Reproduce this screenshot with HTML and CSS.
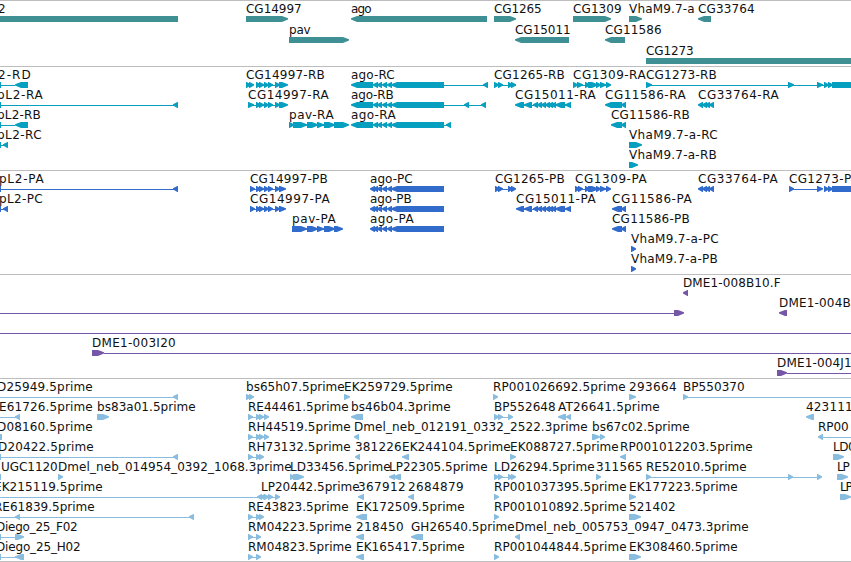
FILE: index.html
```html
<!DOCTYPE html>
<html lang="en">
<head>
<meta charset="utf-8">
<title>Genome tracks</title>
<link rel="stylesheet" href="styles.css">
</head>
<body>
<main class="browser">
  <section class="track genes"></section>
  <section class="track transcripts"></section>
  <section class="track proteins"></section>
  <section class="track clones"></section>
  <section class="track ests"></section>
</main>
<script src="tracks.js"></script>
</body>
</html>
```
FILE: styles.css
```css
body {
  margin: 0;
  background: #fff;
}

.browser {
  display: flex;
  flex-direction: column;
  height: 562px;
  overflow: hidden;
}

.track {
  box-sizing: border-box;
  flex: none;
  height: 104px;
  border-top: 1px solid #bdbdbd;
  overflow: hidden;
}

.genes { height: 66px; color: #3f9094; }
.transcripts { color: #069fc0; }
.proteins { color: #316bcc; }
.clones { color: #7656a6; }
.ests { height: 184px; color: #88bddf; border-bottom: 1px solid #bdbdbd; }

.canvas {
  display: block;
  width: 100%;
  height: 100%;
}

.label {
  font: 12px "DejaVu Sans", sans-serif;
  fill: #111;
}

.glyph {
  fill: currentColor;
}
```
FILE: tracks.js
```js
// Feature: [row, label, label start, label end, glyphs]
// Glyph tokens: "a>b" and "a<b" are stranded blocks, "a=b" a plain block, "a_b" a connector.
const agoExons = '373<378 377<382 382<387 387<392 391<444';
const cgExons = '256>261 259>264 264>269 268>273 275>280 279>288 256_286';
const cdsExons = '250>255 256>261 259>264 264>269 268>273 275>280 279>286 250_285';
const exons15011 = '524<532 533<538 537<542 541<546 545<550 548<553 551<556 555<565 565<571 518_570';
const exons1309 = '585>590 588>598 596>601 600>606 606>611 578_608';
const exons33764 = '698<703 702<707 705<710 709<714';

const tracks = {
  genes: { pitch: 21, features: [
    [0, '2', -2, 6, '0=178'],
    [0, 'CG14997', 246, 302, '246>288'],
    [0, 'ago', 351, 372, '351<487'],
    [0, 'CG1265', 494, 542, '494>516'],
    [0, 'CG1309', 573, 622, '573>611'],
    [0, 'VhaM9.7-a', 629, 695, '629>642'],
    [0, 'CG33764', 698, 755, '698<711'],
    [1, 'pav', 289, 311, '289>349'],
    [1, 'CG15011', 515, 571, '515<569'],
    [1, 'CG11586', 605, 662, '605<625'],
    [2, 'CG1273', 646, 694, '646=851']
  ]},
  transcripts: { pitch: 20, features: [
    [0, '2-RD', -2, 31, '0=1 0_15 15<28'],
    [0, 'CG14997-RB', 246, 325, '246>251 249>254 ' + cgExons],
    [0, 'ago-RC', 351, 395, '351<373 ' + agoExons + ' 444_487 483<488'],
    [0, 'CG1265-RB', 494, 565, '494>499 498>503 508>513 511>516 494_516'],
    [0, 'CG1309-RA', 573, 646, '573>578 577>583 ' + exons1309],
    [0, 'CG1273-RB', 646, 717, '646>652 646_851 788>794 817>823 824>829 828>833 832=851'],
    [1, 'pL2-RA', -3, 43, '0=1 0_178 173<178'],
    [1, 'CG14997-RA', 248, 329, '248>254 250_257 ' + cgExons],
    [1, 'ago-RB', 351, 394, '351<373 ' + agoExons + ' 444_485 464<469 481<486'],
    [1, 'CG15011-RA', 515, 596, '515<524 ' + exons15011],
    [1, 'CG11586-RA', 605, 686, '605<622 621<626'],
    [1, 'CG33764-RA', 698, 779, exons33764],
    [2, 'pL2-RB', -3, 41, '0=1 0_15 15<28'],
    [2, 'pav-RA', 289, 334, '289>294 293>307 307>318 317>324 324>335 334>349 290_348'],
    [2, 'ago-RA', 351, 396, '351<373 ' + agoExons + ' 444_450 446<451'],
    [2, 'CG11586-RB', 611, 690, '611<622 621<626'],
    [3, 'pL2-RC', -3, 42, '0=1 0_5 3<8'],
    [3, 'VhaM9.7-a-RC', 629, 718, '629>642'],
    [4, 'VhaM9.7-a-RB', 629, 717, '629>638']
  ]},
  proteins: { pitch: 20, features: [
    [0, 'pL2-PA', -1, 44, '0=1 0_178 173<178'],
    [0, 'CG14997-PB', 250, 328, cdsExons],
    [0, 'ago-PC', 370, 413, '370<375 ' + agoExons],
    [0, 'CG1265-PB', 495, 565, '495>500 498>503 508>513 511>516 496_515'],
    [0, 'CG1309-PA', 575, 647, '575>580 578>583 ' + exons1309],
    [0, 'CG33764-PA', 698, 778, exons33764],
    [0, 'CG1273-PB', 789, 860, '789>794 790_820 817>823 824>829 828>833 832=851'],
    [1, 'pL2-PC', -1, 43, '0=1 0_5 3<8'],
    [1, 'CG14997-PA', 250, 330, cdsExons],
    [1, 'ago-PB', 370, 412, '370<375 ' + agoExons],
    [1, 'CG15011-PA', 516, 596, '516<524 ' + exons15011],
    [1, 'CG11586-PA', 612, 692, '612<622 621<626'],
    [2, 'pav-PA', 292, 336, '292>307 307>318 317>324 324>335 334>343 296_342'],
    [2, 'ago-PA', 370, 414, '370<375 ' + agoExons],
    [2, 'CG11586-PB', 612, 690, '612<622 621<626'],
    [3, 'VhaM9.7-a-PC', 631, 719, '631>636'],
    [4, 'VhaM9.7-a-PB', 631, 718, '631>636']
  ]},
  clones: { pitch: 20, features: [
    [0, 'DME1-008B10.F', 683, 781, '683<688'],
    [1, 'DME1-004B', 779, 851, '779<787'],
    [1, '', 0, 0, '0_674 674>684'],
    [2, '', 0, 0, '0_851'],
    [3, 'DME1-003I20', 92, 176, '92>104 104_851'],
    [4, 'DME1-004J1', 777, 852, '777>787 787_851']
  ]},
  ests: { pitch: 20, features: [
    [0, 'D25949.5prime', -3, 93, '0_178 173<178'],
    [0, 'bs65h07.5prime', 246, 345, '246>251 249>254'],
    [0, 'EK259729.5prime', 344, 453, '344>350'],
    [0, 'RP001026692.5prime', 493, 626, '493>498'],
    [0, '293664', 629, 677, '629>636'],
    [0, 'BP550370', 683, 745, '683>688 683_851'],
    [1, 'E61726.5prime', -1, 93, '0_20 15<20'],
    [1, 'bs83a01.5prime', 97, 196, '97>109'],
    [1, 'RE44461.5prime', 248, 349, '248>253 256>261 259>264 264>269 248_266'],
    [1, 'bs46b04.3prime', 351, 451, '351<363'],
    [1, 'BP552648', 494, 556, '494>499 498>503 508>513 494_510'],
    [1, 'AT26641.5prime', 558, 660, '558<566 566<571'],
    [1, '423111', 806, 853, '806<814'],
    [2, 'D08160.5prime', -3, 93, '0=2'],
    [2, 'RH44519.5prime', 248, 351, '248>253 256>261 259>264 264>269 248_266'],
    [2, 'Dmel_neb_012191_0332_2522.3prime', 354, 588, '354<359'],
    [2, 'bs67c02.5prime', 592, 690, '592>600 600>605'],
    [2, 'RP00', 818, 849, '818<823 820_851'],
    [3, 'D20422.5prime', -2, 94, '0=1 0_178 173<178'],
    [3, 'RH73132.5prime', 248, 351, '248>253 256>261 259>264 248_260'],
    [3, '381226', 355, 402, '355<360'],
    [3, 'EK244104.5prime', 402, 511, '402<409'],
    [3, 'EK088727.5prime', 510, 619, '510>516'],
    [3, 'RP001012203.5prime', 620, 753, '620<626'],
    [3, 'LD0', 833, 856, '833>844'],
    [4, 'UGC1120', 1, 58, '0=1'],
    [4, 'Dmel_neb_014954_0392_1068.3prime', 58, 292, '58>63'],
    [4, 'LD33456.5prime', 290, 391, '290>295 293>304'],
    [4, 'LP22305.5prime', 389, 488, '389<395 393<401'],
    [4, 'LD26294.5prime', 494, 595, '494>499 498>503 508>513 511>516 494_512'],
    [4, '311565', 596, 643, '596>601'],
    [4, 'RE52010.5prime', 646, 747, '646>651 646_820 788>793 817>822'],
    [4, 'LP', 837, 850, '837>848'],
    [5, 'EK215119.5prime', -6, 103, '0_275 257<262 260<265 264>269 268>273 275>280'],
    [5, 'LP20442.5prime', 261, 360, ''],
    [5, '367912', 358, 406, '358<364'],
    [5, '2684879', 408, 464, '408<414'],
    [5, 'RP001037395.5prime', 494, 627, '494>499'],
    [5, 'EK177223.5prime', 629, 738, '629>636'],
    [5, 'LP', 840, 853, '840>851'],
    [6, 'RE61839.5prime', -6, 95, '0_194 15<20 189<194'],
    [6, 'RE43823.5prime', 248, 349, '248>253 256>261 259>264 248_260'],
    [6, 'EK172509.5prime', 356, 465, '356<367'],
    [6, 'RP001010892.5prime', 494, 627, '494>499'],
    [6, '521402', 629, 676, '629>641'],
    [7, 'Diego_25_F02', -4, 78, '0=1 0_15 15>24'],
    [7, 'RM04223.5prime', 248, 352, '248>253 256>261 248_258'],
    [7, '218450', 356, 404, '356<364'],
    [7, 'GH26540.5prime', 411, 515, '411<423'],
    [7, 'Dmel_neb_005753_0947_0473.3prime', 515, 749, '515<520'],
    [8, 'Diego_25_H02', -4, 81, '0=1 0_16 15<24'],
    [8, 'RM04823.5prime', 248, 352, '248>253 256>261 248_258'],
    [8, 'EK165417.5prime', 356, 465, '356<364'],
    [8, 'RP001044844.5prime', 494, 627, '494>499'],
    [8, 'EK308460.5prime', 629, 738, '629>641']
  ]}
};

// y values are relative to the content box, below the 1px track border.
function glyph(token, top) {
  const [, from, kind, to] = token.match(/^(\d+)([<>=_])(\d+)$/);
  const a = +from, b = +to;
  if (kind === '_') return `M${a} ${top + 3}H${b}v1H${a}z`;
  if (kind === '=') return `M${a} ${top}H${b}v6H${a}z`;
  const head = Math.min(6, b - a - 0.6);
  return kind === '>'
    ? `M${a} ${top}H${b - head}L${b} ${top + 2.2}v1.4L${b - head} ${top + 6}H${a}z`
    : `M${b} ${top}H${a + head}L${a} ${top + 2.2}v1.4L${a + head} ${top + 6}H${b}z`;
}

for (const [name, { pitch, features }] of Object.entries(tracks)) {
  const parts = features.map(([row, label, start, end, glyphs]) => {
    const top = row * pitch + 15;
    const shapes = glyphs.split(' ').filter(Boolean)
      .map(t => `<path class="glyph" d="${glyph(t, top)}"/>`).join('');
    const text = label
      ? `<text class="label" x="${start}" y="${top - 3}" textLength="${end - start - 0.3}">${label}</text>`
      : '';
    return shapes + text;
  });
  document.querySelector('.' + name).innerHTML = `<svg class="canvas">${parts.join('')}</svg>`;
}
```
